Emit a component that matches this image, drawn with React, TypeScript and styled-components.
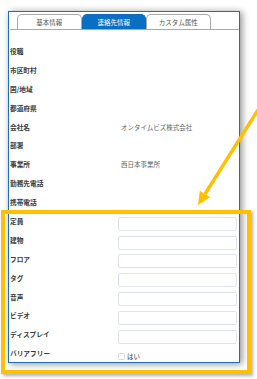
import styled, { createGlobalStyle } from 'styled-components';

const GlobalStyle = createGlobalStyle`
  html, body {
    margin: 0;
    padding: 0;
    background: #ffffff;
  }
  body {
    font-family: 'Noto Sans CJK JP', 'Noto Sans', sans-serif;
  }
`;

type Field = {
  label: string;
  kind: 'text' | 'input' | 'check';
  value?: string;
};

const fields: Field[] = [
  { label: '役職', kind: 'text' },
  { label: '市区町村', kind: 'text' },
  { label: '国/地域', kind: 'text' },
  { label: '都道府県', kind: 'text' },
  { label: '会社名', kind: 'text', value: 'オンタイムビズ株式会社' },
  { label: '部署', kind: 'text' },
  { label: '事業所', kind: 'text', value: '西日本事業所' },
  { label: '勤務先電話', kind: 'text' },
  { label: '携帯電話', kind: 'text' },
  { label: '定員', kind: 'input' },
  { label: '建物', kind: 'input' },
  { label: 'フロア', kind: 'input' },
  { label: 'タグ', kind: 'input' },
  { label: '音声', kind: 'input' },
  { label: 'ビデオ', kind: 'input' },
  { label: 'ディスプレイ', kind: 'input' },
  { label: 'バリアフリー', kind: 'check' },
];

const tabs = ['基本情報', '連絡先情報', 'カスタム属性'];

const App = () => {
  return (
    <>
      <GlobalStyle />
      <Stage>
        <Panel>
          <TabBar>
            {tabs.map((t, i) => (
              <Tab key={t} $active={i === 1}>
                {t}
              </Tab>
            ))}
          </TabBar>
          <Body>
            {fields.map((f) => (
              <Row key={f.label}>
                <Label>{f.label}</Label>
                {f.kind === 'text' && <Value>{f.value ?? ''}</Value>}
                {f.kind === 'input' && <Input type="text" />}
                {f.kind === 'check' && (
                  <CheckWrap>
                    <Box />
                    <CheckText>はい</CheckText>
                  </CheckWrap>
                )}
              </Row>
            ))}
          </Body>
        </Panel>
        <Highlight />
        {/* callout arrow pointing at the highlighted fields */}
        <Arrow width="257" height="379" viewBox="0 0 257 379">
          <line x1="275" y1="83" x2="205" y2="194" stroke="#ffc000" strokeWidth="3.4" />
          <polygon points="198,205 199.8,190.8 210,197.2" fill="#ffc000" />
        </Arrow>
      </Stage>
    </>
  );
};

const Stage = styled.div`
  position: relative;
  width: 257px;
  height: 379px;
  overflow: hidden;
  padding: 11px 0 0 8px;
  box-sizing: border-box;
  background: #ffffff;
`;

const Panel = styled.div`
  width: 232px;
  height: 352px;
  box-sizing: border-box;
  border: 1px solid #1f6fb6;
  background: #ffffff;
  box-shadow: 2px 1px 7px rgba(0, 0, 0, 0.45);
  overflow: hidden;
`;

const TabBar = styled.div`
  display: flex;
  padding: 2px 0 0 7px;
  border-bottom: 1px solid #a9a9a9;
  margin: 0 0 0 1px;
`;

const Tab = styled.div<{ $active?: boolean }>`
  width: 64.5px;
  height: 15px;
  box-sizing: border-box;
  display: flex;
  align-items: center;
  justify-content: center;
  font-size: 6.5px;
  border: 1px solid ${(p) => (p.$active ? '#0a6fc2' : '#a9a9a9')};
  border-bottom: none;
  border-radius: 5px 5px 0 0;
  background: ${(p) => (p.$active ? '#0a6fc2' : '#ffffff')};
  color: ${(p) => (p.$active ? '#ffffff' : '#555555')};
`;

const Body = styled.div`
  padding: 12px 2px 0 1px;
`;

const Row = styled.div`
  display: grid;
  grid-template-columns: 108px 1fr;
  align-items: start;
  height: 18.9px;
`;

const Label = styled.div`
  font-size: 6.7px;
  line-height: 18px;
  font-weight: 700;
  color: #3a3a3a;
  white-space: nowrap;
`;

const Value = styled.div`
  font-size: 6.5px;
  line-height: 18px;
  color: #666666;
  padding-left: 3px;
  white-space: nowrap;
`;

const Input = styled.input`
  all: unset;
  box-sizing: border-box;
  margin-top: 4.6px;
  width: 119px;
  height: 14px;
  border: 1px solid #dfe3ec;
  border-radius: 2px;
  background: #ffffff;
`;

const CheckWrap = styled.div`
  display: flex;
  align-items: center;
  gap: 2px;
  margin-top: 7.5px;
  height: 9px;
`;

const Box = styled.span`
  width: 7px;
  height: 7px;
  box-sizing: border-box;
  border: 1px solid #d6d9e0;
  border-radius: 1.5px;
  background: #ffffff;
`;

const CheckText = styled.span`
  font-size: 6.5px;
  line-height: 9px;
  color: #333333;
`;

const Highlight = styled.div`
  position: absolute;
  left: 0.5px;
  top: 209.5px;
  width: 250px;
  height: 164.5px;
  box-sizing: border-box;
  border: 4px solid #ffc000;
  box-shadow: 2px 2px 3px rgba(0, 0, 0, 0.3);
  pointer-events: none;
`;

const Arrow = styled.svg`
  position: absolute;
  left: 0;
  top: 0;
  pointer-events: none;
`;

export default App;
